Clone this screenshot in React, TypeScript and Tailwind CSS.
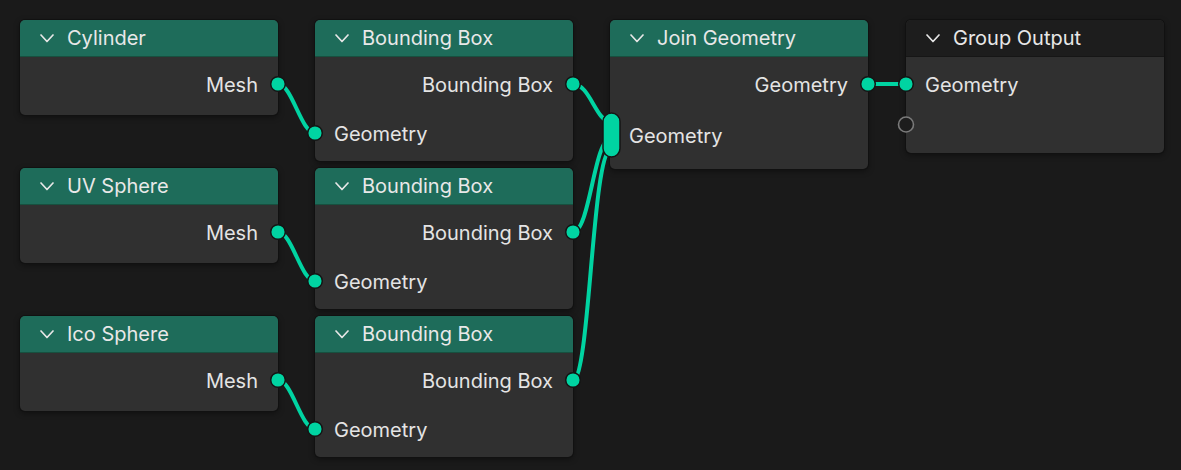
import React from 'react'

// node editor: nodes sit on a free canvas, links drawn in one svg on top

type Row = { label?: string; side: 'in' | 'out' | 'empty' }

type NodeDef = {
  id: string
  title: string
  x: number
  y: number
  header: 'green' | 'dark'
  pt: number
  gaps: number[]
  pb: number
  rows: Row[]
}

const NODES: NodeDef[] = [
  { id: 'cyl', title: 'Cylinder', x: 20, y: 20, header: 'green', pt: 12, gaps: [], pb: 16, rows: [{ label: 'Mesh', side: 'out' }] },
  { id: 'uv', title: 'UV Sphere', x: 20, y: 168, header: 'green', pt: 12, gaps: [], pb: 16, rows: [{ label: 'Mesh', side: 'out' }] },
  { id: 'ico', title: 'Ico Sphere', x: 20, y: 316, header: 'green', pt: 12, gaps: [], pb: 16, rows: [{ label: 'Mesh', side: 'out' }] },
  {
    id: 'bb1', title: 'Bounding Box', x: 315, y: 20, header: 'green', pt: 12, gaps: [19], pb: 13,
    rows: [{ label: 'Bounding Box', side: 'out' }, { label: 'Geometry', side: 'in' }],
  },
  {
    id: 'bb2', title: 'Bounding Box', x: 315, y: 168, header: 'green', pt: 12, gaps: [19], pb: 13,
    rows: [{ label: 'Bounding Box', side: 'out' }, { label: 'Geometry', side: 'in' }],
  },
  {
    id: 'bb3', title: 'Bounding Box', x: 315, y: 316, header: 'green', pt: 12, gaps: [19], pb: 13,
    rows: [{ label: 'Bounding Box', side: 'out' }, { label: 'Geometry', side: 'in' }],
  },
  {
    id: 'join', title: 'Join Geometry', x: 610, y: 20, header: 'green', pt: 12, gaps: [21], pb: 19,
    rows: [{ label: 'Geometry', side: 'out' }, { label: 'Geometry', side: 'in' }],
  },
  {
    id: 'out', title: 'Group Output', x: 906, y: 20, header: 'dark', pt: 12, gaps: [11], pb: 13,
    rows: [{ label: 'Geometry', side: 'in' }, { side: 'empty' }],
  },
]

const LINKS = [
  'M278 84 C292 84, 301 133, 315 133',
  'M278 232 C292 232, 301 281, 315 281',
  'M278 380 C292 380, 301 429, 315 429',
  'M573 84 C590 84, 596 122, 611 122',
  'M573 232 C590 232, 594 138, 611 138',
  'M573 380 C590 380, 592 150, 611 150',
  'M868 84 L906 84',
]

const SOCKETS: [number, number][] = [
  [278, 84], [278, 232], [278, 380],
  [315, 133], [315, 281], [315, 429],
  [573, 84], [573, 232], [573, 380],
  [868, 84], [906, 84],
]

const GREEN = '#00d4a2'

export default function App() {
  return (
    <div
      className="relative w-[1181px] h-[470px] overflow-hidden bg-[#1a1a1a] text-[#e4e4e4]"
      style={{ fontFamily: 'Inter, "Noto Sans", sans-serif' }}
    >
      {NODES.map((n) => (
        <NodeBox key={n.id} node={n} />
      ))}

      <svg className="absolute inset-0 pointer-events-none" width={1181} height={470}>
        {LINKS.map((d, i) => (
          <path key={i} d={d} fill="none" stroke={GREEN} strokeWidth={4} strokeLinecap="round" />
        ))}
        {SOCKETS.map(([x, y], i) => (
          <circle key={i} cx={x} cy={y} r={7.3} fill={GREEN} stroke="#151515" strokeWidth={1.5} />
        ))}
        {/* multi-input pill on Join Geometry */}
        <rect x={603} y={113} width={17} height={44} rx={8.5} fill={GREEN} stroke="#151515" strokeWidth={1.5} />
        {/* unconnected virtual socket */}
        <circle cx={906} cy={124.5} r={7.5} fill="#1d1d1d" stroke="#7a7a7a" strokeWidth={1.6} />
      </svg>
    </div>
  )
}

function NodeBox({ node }: { node: NodeDef }) {
  const headerCls =
    node.header === 'green' ? 'bg-[#1e6c5a] border-b border-[#17503f]' : 'bg-[#1d1d1d] border-b border-[#161616]'
  return (
    <div
      className="absolute w-[258px] rounded-[5px] overflow-hidden bg-[#303030] shadow-[0_0_0_1px_#111,0_2px_6px_rgba(0,0,0,0.45)]"
      style={{ left: node.x, top: node.y }}
    >
      <div className={`h-[37px] flex items-center pl-[20px] gap-[13px] ${headerCls}`}>
        <svg width={14} height={9} viewBox="0 0 14 9" className="shrink-0">
          <polyline points="1,1 7,7.5 13,1" fill="none" stroke="#e6e6e6" strokeWidth={1.7} strokeLinecap="round" strokeLinejoin="round" />
        </svg>
        <span className="text-[20px] leading-none text-[#e8e8e8] whitespace-nowrap">{node.title}</span>
      </div>
      <div className="flex flex-col" style={{ paddingTop: node.pt, paddingBottom: node.pb }}>
        {node.rows.map((r, i) => (
          <div
            key={i}
            className={[
              'h-[30px] pt-[2px] flex items-center text-[20px] leading-none whitespace-nowrap',
              r.side === 'out' ? 'justify-end pr-[20px]' : 'justify-start pl-[19px]',
            ].join(' ')}
            style={{ marginTop: i > 0 ? node.gaps[i - 1] : 0 }}
          >
            {r.label}
          </div>
        ))}
      </div>
    </div>
  )
}
